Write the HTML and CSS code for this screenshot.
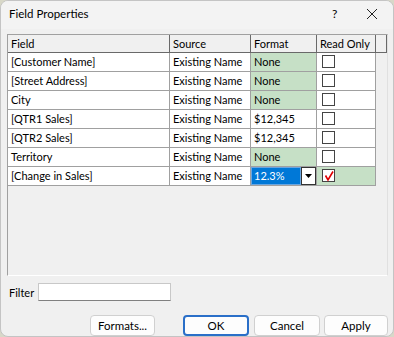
FILE: index.html
```html
<!DOCTYPE html>
<html lang="en">
<head>
    <meta charset="UTF-8">
    <title>Field Properties</title>
    <link rel="stylesheet" href="styles.css">
</head>
<body>
<div class="dialog">
    <!-- title bar -->
    <div class="titlebar">
        <span class="title">Field Properties</span>
        <span class="help">?</span>
        <svg class="close" viewBox="0 0 12 12" width="12" height="12">
            <path d="M1 1 L11 11 M11 1 L1 11"/>
        </svg>
    </div>
    <!-- grid -->
    <div class="gridbox">
        <table class="grid">
            <tr class="head">
                <th class="c-field">Field</th>
                <th class="c-source">Source</th>
                <th class="c-format">Format</th>
                <th class="c-ro">Read Only</th>
                <th class="c-pad"></th>
            </tr>
            <tr>
                <td>[Customer Name]</td><td>Existing Name</td>
                <td class="green">None</td><td><span class="check"></span></td>
            </tr>
            <tr>
                <td>[Street Address]</td><td>Existing Name</td>
                <td class="green">None</td><td><span class="check"></span></td>
            </tr>
            <tr>
                <td>City</td><td>Existing Name</td>
                <td class="green">None</td><td><span class="check"></span></td>
            </tr>
            <tr>
                <td>[QTR1 Sales]</td><td>Existing Name</td>
                <td>$12,345</td><td><span class="check"></span></td>
            </tr>
            <tr>
                <td>[QTR2 Sales]</td><td>Existing Name</td>
                <td>$12,345</td><td><span class="check"></span></td>
            </tr>
            <tr>
                <td>Territory</td><td>Existing Name</td>
                <td class="green">None</td><td><span class="check"></span></td>
            </tr>
            <tr>
                <td>[Change in Sales]</td><td>Existing Name</td>
                <td class="editing">
                    <div class="combo">
                        <span class="combo-text">12.3%</span>
                        <span class="combo-btn">
                            <svg viewBox="0 0 7 4" width="7" height="4"><path d="M0 0 H7 L3.5 4 Z"/></svg>
                        </span>
                    </div>
                </td>
                <td class="green">
                    <span class="check">
                        <svg viewBox="0 0 12 12" width="12" height="12">
                            <path d="M2.5 5.5 L5 10 L10 1.5"/>
                        </svg>
                    </span>
                </td>
            </tr>
        </table>
    </div>
    <!-- filter -->
    <div class="filter">
        <label>Filter</label>
        <div class="input"></div>
    </div>
    <!-- buttons -->
    <div class="buttons">
        <button class="btn formats">Formats...</button>
        <button class="btn ok">OK</button>
        <button class="btn cancel">Cancel</button>
        <button class="btn apply">Apply</button>
    </div>
</div>
</body>
</html>
```

FILE: styles.css
```css
body {
    margin: 0;
    background-color: #d8d8c8;
    font-family: Lato, "Liberation Sans", sans-serif;
    font-size: 11px;
    color: #000;
}
/* 对话框 */
.dialog {
    width: 392px;
    height: 335px;
    background-color: #f0f0f0;
    border: 1px solid #c4c4c4;
    border-radius: 8px;
    display: flex;
    flex-direction: column;
    overflow: hidden;
}
.titlebar {
    height: 26px;
    display: flex;
    align-items: center;
    padding: 0 0 2px 8px;
    background-color: #f3f3f3;
}
.title {
    flex: 1;
    font-size: 11.5px;
}
.help {
    width: 20px;
    margin-right: 14px;
    font-size: 12px;
}
.close {
    margin-right: 15px;
    stroke: #222;
    stroke-width: 1;
    fill: none;
}
/* 表格 */
.gridbox {
    margin: 5px 5px 0 6px;
    height: 241px;
    border: 1px solid #a0a0a0;
    border-right-color: #e0e0e0;
    border-bottom-color: #ffffff;
    background-color: #f0f0f0;
}
.grid {
    border-collapse: collapse;
    table-layout: fixed;
    width: 378px;
}
.grid th, .grid td {
    height: 18px;
    padding: 0 3px;
    text-align: left;
    font-weight: normal;
    white-space: nowrap;
    border: 1px solid #a0a0a0;
    background-color: #fff;
}
.grid tr:first-child th {
    border-top: none;
    height: 17px;
}
.grid tr td:first-child, .grid tr th:first-child {
    border-left: none;
}
.grid th {
    background-color: #f0f0f0;
    border-right: 1px solid #696969;
    border-bottom: 1px solid #696969;
}
.c-field { width: 155px; }
.c-source { width: 74px; }
.c-format { width: 59px; }
.c-ro { width: 52px; }
.c-pad { width: 4px; border-right: none; }
.grid td.green {
    background-color: #c6e0c6;
}
.check {
    display: block;
    width: 11px;
    height: 11px;
    margin-left: 2px;
    border: 1px solid #444;
    background-color: #fff;
}
.check svg {
    display: block;
    stroke: #e00000;
    stroke-width: 1.6;
    fill: none;
}
.grid td.editing {
    padding: 0;
}
.combo {
    display: flex;
    height: 18px;
}
.combo-text {
    flex: 1;
    background-color: #0078d7;
    color: #fff;
    padding: 0 2px;
    line-height: 16px;
    border: 1px solid #6aa6e0;
}
.combo-btn {
    width: 13px;
    display: flex;
    align-items: center;
    justify-content: center;
    border: 1px solid #333;
    background-color: #fff;
}
/* 筛选 */
.filter {
    display: flex;
    align-items: center;
    margin: 7px 0 0 8px;
}
.filter label {
    width: 29px;
}
.input {
    width: 131px;
    height: 16px;
    border: 1px solid #c8c8c8;
    border-bottom-color: #808080;
    background-color: #fff;
}
/* 按钮 */
.buttons {
    display: flex;
    margin: 14px 0 0 89px;
    gap: 4px;
}
.btn {
    width: 66px;
    height: 21px;
    font-family: inherit;
    font-size: 11.5px;
    background-color: #fdfdfd;
    border: 1px solid #d0d0d0;
    border-radius: 4px;
    padding: 0;
}
.btn.formats {
    width: 65px;
    margin-right: 24px;
}
.btn.ok {
    border: 2px solid #2a6fc8;
}
.btn.cancel {
    margin-left: 1px;
}
.btn.apply {
    width: 64px;
}
```
